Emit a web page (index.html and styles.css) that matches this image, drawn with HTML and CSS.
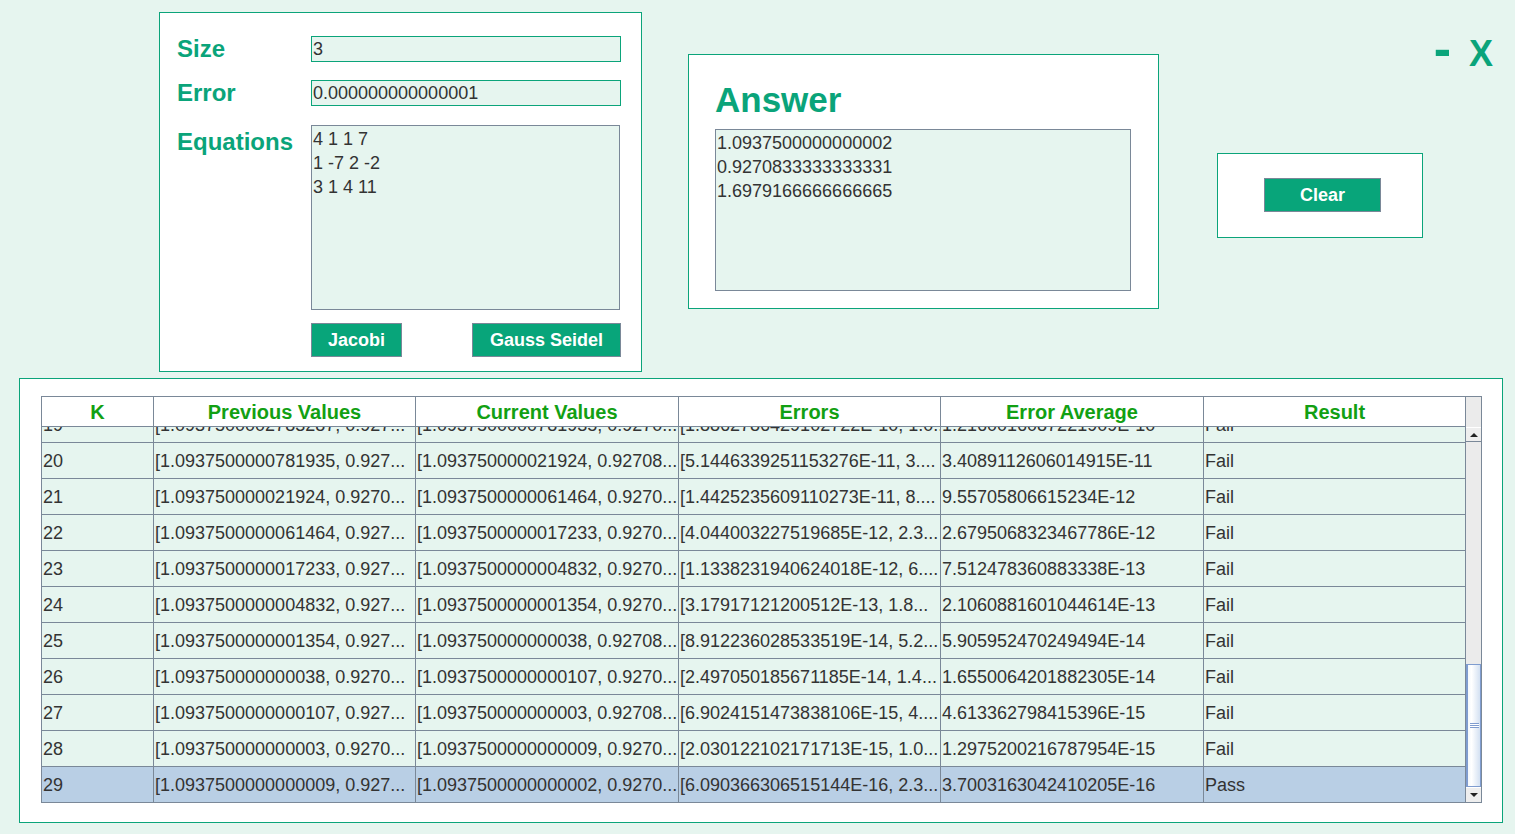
FILE: index.html
```html
<!DOCTYPE html>
<html lang="en">
<head>
<meta charset="utf-8">
<title>Iterative Solver</title>
<link rel="stylesheet" href="styles.css">
</head>
<body>
<div class="app">
  <div class="top">
    <section class="panel input-panel">
      <div class="form">
        <div class="row">
          <label class="label" for="size">Size</label>
          <input id="size" class="field" value="3">
        </div>
        <div class="row row-error">
          <label class="label" for="err">Error</label>
          <input id="err" class="field" value="0.000000000000001">
        </div>
        <div class="row row-eq">
          <label class="label label-eq" for="eq">Equations</label>
          <textarea id="eq" class="area area-eq">4 1 1 7
1 -7 2 -2
3 1 4 11</textarea>
        </div>
        <div class="row row-actions">
          <div class="actions">
            <button class="btn btn-jacobi">Jacobi</button>
            <button class="btn btn-gauss">Gauss Seidel</button>
          </div>
        </div>
      </div>
    </section>

    <section class="panel answer-panel">
      <h1 class="answer-title">Answer</h1>
      <textarea class="area area-answer">1.0937500000000002
0.9270833333333331
1.6979166666666665</textarea>
    </section>

    <section class="panel clear-panel">
      <button class="btn btn-clear">Clear</button>
    </section>

    <div class="win-controls">
      <span class="win-min">-</span>
      <span class="win-close">X</span>
    </div>
  </div>

  <section class="panel table-panel">
    <div class="table">
      <div class="table-main">
        <div class="thead">
          <div class="th">K</div>
          <div class="th">Previous Values</div>
          <div class="th">Current Values</div>
          <div class="th">Errors</div>
          <div class="th">Error Average</div>
          <div class="th">Result</div>
        </div>
        <div class="tbody">
          <div class="tr tr-partial">
            <div class="td">19</div>
            <div class="td">[1.0937500002783287, 0.927...</div>
            <div class="td">[1.0937500000781935, 0.9270...</div>
            <div class="td">[1.8862786429102722E-10, 1.0...</div>
            <div class="td">1.2160016087221909E-10</div>
            <div class="td">Fail</div>
          </div>
          <div class="tr">
            <div class="td">20</div>
            <div class="td">[1.0937500000781935, 0.927...</div>
            <div class="td">[1.093750000021924, 0.92708...</div>
            <div class="td">[5.1446339251153276E-11, 3....</div>
            <div class="td">3.4089112606014915E-11</div>
            <div class="td">Fail</div>
          </div>
          <div class="tr">
            <div class="td">21</div>
            <div class="td">[1.093750000021924, 0.9270...</div>
            <div class="td">[1.0937500000061464, 0.9270...</div>
            <div class="td">[1.4425235609110273E-11, 8....</div>
            <div class="td">9.55705806615234E-12</div>
            <div class="td">Fail</div>
          </div>
          <div class="tr">
            <div class="td">22</div>
            <div class="td">[1.0937500000061464, 0.927...</div>
            <div class="td">[1.0937500000017233, 0.9270...</div>
            <div class="td">[4.044003227519685E-12, 2.3...</div>
            <div class="td">2.6795068323467786E-12</div>
            <div class="td">Fail</div>
          </div>
          <div class="tr">
            <div class="td">23</div>
            <div class="td">[1.0937500000017233, 0.927...</div>
            <div class="td">[1.0937500000004832, 0.9270...</div>
            <div class="td">[1.1338231940624018E-12, 6....</div>
            <div class="td">7.512478360883338E-13</div>
            <div class="td">Fail</div>
          </div>
          <div class="tr">
            <div class="td">24</div>
            <div class="td">[1.0937500000004832, 0.927...</div>
            <div class="td">[1.0937500000001354, 0.9270...</div>
            <div class="td">[3.17917121200512E-13, 1.8...</div>
            <div class="td">2.1060881601044614E-13</div>
            <div class="td">Fail</div>
          </div>
          <div class="tr">
            <div class="td">25</div>
            <div class="td">[1.0937500000001354, 0.927...</div>
            <div class="td">[1.093750000000038, 0.92708...</div>
            <div class="td">[8.912236028533519E-14, 5.2...</div>
            <div class="td">5.905952470249494E-14</div>
            <div class="td">Fail</div>
          </div>
          <div class="tr">
            <div class="td">26</div>
            <div class="td">[1.093750000000038, 0.9270...</div>
            <div class="td">[1.0937500000000107, 0.9270...</div>
            <div class="td">[2.497050185671185E-14, 1.4...</div>
            <div class="td">1.6550064201882305E-14</div>
            <div class="td">Fail</div>
          </div>
          <div class="tr">
            <div class="td">27</div>
            <div class="td">[1.0937500000000107, 0.927...</div>
            <div class="td">[1.093750000000003, 0.92708...</div>
            <div class="td">[6.9024151473838106E-15, 4....</div>
            <div class="td">4.613362798415396E-15</div>
            <div class="td">Fail</div>
          </div>
          <div class="tr">
            <div class="td">28</div>
            <div class="td">[1.093750000000003, 0.9270...</div>
            <div class="td">[1.0937500000000009, 0.9270...</div>
            <div class="td">[2.030122102171713E-15, 1.0...</div>
            <div class="td">1.2975200216787954E-15</div>
            <div class="td">Fail</div>
          </div>
          <div class="tr tr-selected">
            <div class="td">29</div>
            <div class="td">[1.0937500000000009, 0.927...</div>
            <div class="td">[1.0937500000000002, 0.9270...</div>
            <div class="td">[6.090366306515144E-16, 2.3...</div>
            <div class="td">3.7003163042410205E-16</div>
            <div class="td">Pass</div>
          </div>
        </div>
      </div>
      <div class="scroll-col">
        <div class="scroll-corner"></div>
        <div class="scrollbar">
          <div class="sb-btn sb-up"><span class="tri tri-up"></span></div>
          <div class="sb-track"></div>
          <div class="sb-thumb"><span class="grip"></span></div>
          <div class="sb-btn sb-down"><span class="tri tri-down"></span></div>
        </div>
      </div>
    </div>
  </section>
</div>
</body>
</html>
```
FILE: styles.css
```css
* { box-sizing: border-box; }

html, body {
  margin: 0;
  padding: 0;
  background: #e6f5ef;
}

body {
  font-family: "Liberation Sans", Arial, sans-serif;
  color: #333333;
  width: 1515px;
  height: 834px;
  overflow: hidden;
}

.app {
  display: flex;
  flex-direction: column;
}

.top {
  display: flex;
  align-items: flex-start;
  padding: 12px 22px 0 159px;
}

.panel {
  background: #ffffff;
  border: 1px solid #0ba47a;
}

/* ---------- input panel ---------- */
.input-panel {
  width: 483px;
  height: 360px;
  padding: 23px 0 0 17px;
}

.form {
  display: flex;
  flex-direction: column;
}

.row {
  display: flex;
  align-items: center;
  height: 26px;
}

.row-error { margin-top: 18px; }
.row-eq { margin-top: 19px; align-items: flex-start; height: 185px; }
.row-actions { margin-top: 13px; padding-left: 134px; height: 34px; }

.label {
  width: 134px;
  font-size: 24px;
  line-height: 26px;
  font-weight: bold;
  color: #0aa47a;
}

.label-eq { margin-top: 4px; }

.field {
  width: 310px;
  height: 26px;
  border: 1px solid #0ba47a;
  background: #e6f5ef;
  font-family: "Liberation Sans", Arial, sans-serif;
  font-size: 18px;
  color: #333333;
  padding: 0 1px;
  margin: 0;
  outline: none;
}

.area {
  border: 1px solid #7a8898;
  background: #e6f5ef;
  font-family: "Liberation Sans", Arial, sans-serif;
  font-size: 18px;
  line-height: 24px;
  color: #333333;
  padding: 1px 1px;
  margin: 0;
  resize: none;
  outline: none;
  overflow: hidden;
}

.area-eq {
  width: 309px;
  height: 185px;
}

.actions {
  width: 310px;
  display: flex;
  justify-content: space-between;
}

.btn {
  height: 34px;
  border: 1px solid #7a8898;
  background: #08a57a;
  color: #ffffff;
  font-family: "Liberation Sans", Arial, sans-serif;
  font-size: 18px;
  font-weight: bold;
  padding: 0;
  margin: 0;
}

.btn-jacobi { width: 91px; }
.btn-gauss { width: 149px; }

/* ---------- answer panel ---------- */
.answer-panel {
  width: 471px;
  height: 255px;
  margin: 42px 0 0 46px;
  padding: 25px 0 0 26px;
}

.answer-title {
  margin: 0;
  font-size: 35px;
  line-height: 40px;
  font-weight: bold;
  color: #0aa47a;
}

.area-answer {
  display: block;
  width: 416px;
  height: 162px;
  margin-top: 9px;
}

/* ---------- clear panel ---------- */
.clear-panel {
  width: 206px;
  height: 85px;
  margin: 141px 0 0 58px;
  padding: 24px 0 0 46px;
}

.btn-clear { width: 117px; }

/* ---------- window controls ---------- */
.win-controls {
  margin-left: auto;
  margin-top: 14px;
  display: flex;
  align-items: baseline;
  color: #0aa47a;
  font-weight: bold;
}

.win-min {
  font-size: 52px;
  line-height: 44px;
  margin-right: 18px;
}

.win-close {
  font-size: 36px;
  line-height: 44px;
}

/* ---------- table panel ---------- */
.table-panel {
  width: 1484px;
  height: 445px;
  margin: 6px 0 0 19px;
  padding: 17px 0 0 21px;
}

.table {
  display: flex;
  width: 1441px;
  height: 407px;
  border: 1px solid #7a8898;
}

.table-main {
  width: 1424px;
  display: flex;
  flex-direction: column;
}

.thead,
.tr {
  display: grid;
  grid-template-columns: 112px 262px 263px 262px 263px 262px;
}

.thead {
  height: 30px;
  background: #ffffff;
  border-bottom: 1px solid #7a8898;
}

.th {
  border-right: 1px solid #7a8898;
  text-align: center;
  font-size: 20px;
  font-weight: bold;
  line-height: 30px;
  color: #12a013;
  white-space: nowrap;
  overflow: hidden;
}

.tbody {
  height: 375px;
  overflow: hidden;
  background: #e6f5ef;
}

.tr {
  height: 36px;
  border-bottom: 1px solid #7a8898;
  background: #e6f5ef;
}

.tr-partial { margin-top: -20px; }

.tr-selected { background: #b9cfe5; }

.td {
  border-right: 1px solid #7a8898;
  padding-left: 1px;
  font-size: 18px;
  line-height: 36px;
  color: #333333;
  white-space: nowrap;
  overflow: hidden;
}

/* ---------- scrollbar ---------- */
.scroll-col {
  width: 15px;
  display: flex;
  flex-direction: column;
  background: #ebebeb;
}

.scroll-corner {
  height: 30px;
  background: #ebebeb;
}

.scrollbar {
  height: 375px;
  display: flex;
  flex-direction: column;
}

.sb-btn {
  height: 15px;
  display: flex;
  align-items: center;
  justify-content: center;
  background: #eeeeee;
}

.sb-up {
  border-top: 1px solid #ffffff;
  border-bottom: 1px solid #7a8898;
}

.sb-down {
  border-top: 1px solid #ffffff;
}

.tri {
  width: 0;
  height: 0;
  border-left: 4px solid transparent;
  border-right: 4px solid transparent;
}

.tri-up { border-bottom: 4px solid #222222; }
.tri-down { border-top: 4px solid #222222; }

.sb-track {
  height: 222px;
  background: #ebebeb;
}

.sb-thumb {
  height: 123px;
  border: 1px solid #7f9ccf;
  border-left-width: 2px;
  background: linear-gradient(to right, #f4f8fc, #ffffff 30%, #d4e1f2);
  display: flex;
  align-items: center;
  justify-content: center;
}

.grip {
  width: 9px;
  height: 5px;
  border-top: 1px solid #7f9ccf;
  border-bottom: 1px solid #7f9ccf;
  background: linear-gradient(#ffffff 0 1px, #7f9ccf 1px 2px, #ffffff 2px);
  background-size: 100% 3px;
  background-position: 0 0;
}
```
